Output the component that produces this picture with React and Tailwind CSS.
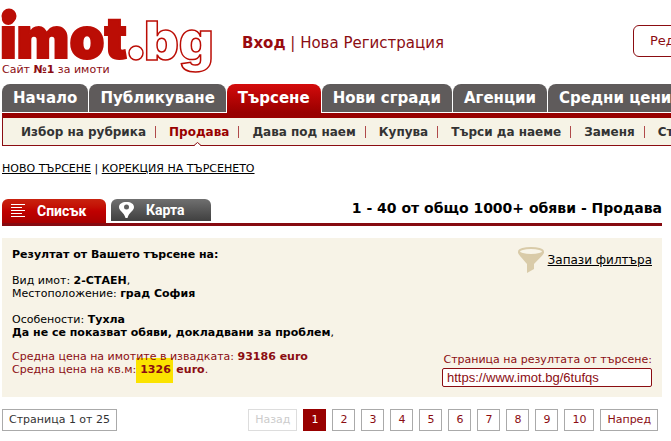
import React, { useState } from 'react';
import clsx from 'clsx';

const sections = ['Начало', 'Публикуване', 'Търсене', 'Нови сгради', 'Агенции', 'Средни цени'];
const rubrics = ['Избор на рубрика', 'Продава', 'Дава под наем', 'Купува', 'Търси да наеме', 'Заменя', 'Статистика'];
const pages = [1, 2, 3, 4, 5, 6, 7, 8, 9, 10];

const Logo = () => (
  <svg className="block h-[75px] w-[216px] overflow-visible" viewBox="0 0 216 75" role="img" aria-label="imot.bg">
    <g fontFamily="Inter, sans-serif" fontWeight="900">
      <text x="0" y="58" fontSize="56" fill="#bb0d05" stroke="#bb0d05" strokeWidth="2">imot</text>
      <text x="144" y="60" fontSize="54" fill="#fff" stroke="#bb0d05" strokeWidth="1.5">bg</text>
    </g>
    <circle cx="9" cy="16" r="7.500" fill="#bb0d05" />
    <circle cx="136" cy="53" r="7" fill="#fff" stroke="#bb0d05" strokeWidth="1.5" />
  </svg>
);

const Header = () => (
  <header className="flex h-[84px] items-start text-[#8b0d12]">
    <a href="#" className="block w-[216px] shrink-0">
      <Logo />
      <span className="-mt-3 block pl-0.5 text-[11px] leading-[13px]">
        Сайт <b>№1</b> за имоти
      </span>
    </a>
    <div className="ml-[26px] mt-8 text-[15px] leading-[22px]">
      <a href="#" className="font-bold text-[#990b10]">Вход</a> | <a href="#">Нова Регистрация</a>
    </div>
    <button
      type="button"
      className="ml-auto -mr-28 mt-[25px] h-8 w-[150px] shrink-0 rounded-md border border-[#8b0d12] pl-4 text-left text-[13px]"
    >
      Редактиране
    </button>
  </header>
);

const MainNav = () => (
  <nav className="ml-0.5">
    <ul className="flex h-[29px] gap-px">
      {sections.map((name) => (
        <li key={name} className="shrink-0">
          <a
            href="#"
            className={clsx(
              'block rounded-t-lg px-[11px] text-[15px] leading-7 font-bold text-white',
              name === 'Търсене' ? 'h-[29px] bg-linear-to-b from-[#d40c0c] to-[#980000]' : 'h-7 bg-[#5f5b5b]'
            )}
          >
            {name}
          </a>
        </li>
      ))}
    </ul>
    <div className="border-t-5 border-b border-l border-t-[#980000] border-b-[#8b0d12] border-l-[#8b0d12] bg-[#f6f3e6]">
      <ul className="flex h-[27px] items-center pl-[18px] text-[12px] leading-4 font-bold text-[#333]">
        {rubrics.map((name) => (
          <li key={name} className="relative flex h-full shrink-0 items-center">
            <a href="#" className={clsx(name === 'Продава' && 'text-[#980000]')}>{name}</a>
            <span className="mr-[13px] ml-[9px] h-3 w-px bg-[#b04a4a]" />
            {name === 'Продава' && (
              <svg className="absolute -bottom-px left-[25px] h-1 w-[7px]" viewBox="0 0 7 4">
                <path d="M0 4L3.5 .5L7 4Z" fill="#fff" />
                <path d="M0 3.5L3.5 .5L7 3.5" fill="none" stroke="#8b0d12" />
              </svg>
            )}
          </li>
        ))}
      </ul>
    </div>
  </nav>
);

const ViewTabs = () => (
  <div className="flex h-[27px] items-start border-b-3 border-[#860a10]">
    <button
      type="button"
      className="flex h-6 w-[104px] items-center rounded-t-md bg-linear-to-b from-[#c9220f] via-[#c00000] to-[#a80000] pl-2 font-[Roboto,sans-serif] text-[14px] font-bold text-white"
    >
      <svg className="mr-3 h-[14px] w-[15px]" viewBox="0 0 15 14" stroke="#fff">
        <path d="M1 .5H15M1 3.5H12M1 6.5H15M1 9.5H12M1 12.5H15" />
      </svg>
      Списък
    </button>
    <button
      type="button"
      className="ml-[5px] flex h-[22px] w-[100px] items-center rounded-t-md bg-linear-to-b from-[#707070] to-[#404040] pl-2 font-[Roboto,sans-serif] text-[14px] font-bold text-white"
    >
      <svg className="mr-3 h-4 w-[15px]" viewBox="0 0 15 16">
        <path d="M7.5 0C3 0 0 2 0 5c0 4 5 5 6.500 11h2C10 10 15 9 15 5c0-3-3-5-7.500-5z" fill="#fff" />
        <circle cx="7.500" cy="5" r="2.500" fill="#606060" />
      </svg>
      Карта
    </button>
    <h1 className="ml-auto text-[14px] leading-[18px] font-bold text-black">1 - 40 от общо 1000+ обяви - Продава</h1>
  </div>
);

const FunnelIcon = () => (
  <svg className="h-[26px] w-[26px]" viewBox="0 0 26 26">
    <path d="M0 5C0 7 2 9 9 17v9l7-4v-5C24 9 26 7 26 5z" fill="#d9cba9" />
    <ellipse cx="13" cy="4.500" rx="12" ry="3.500" fill="#f8f5ea" stroke="#d9cba9" strokeWidth="2" />
  </svg>
);

const Summary = () => (
  <section className="mt-3 flex h-[159px] justify-between bg-[#f7f3e7] px-[10px] text-[11px] leading-[13px] text-black">
    <div className="shrink-0 pt-[10px]">
      <b>Резултат от Вашето търсене на:</b>
      <p className="mt-[13px]">
        Вид имот: <b>2-СТАЕН</b>,
        <br />
        Местоположение: <b>град София</b>
      </p>
      <p className="mt-[13px]">
        Особености: <b>Тухла</b>
        <br />
        <b>Да не се показват обяви, докладвани за проблем</b>,
      </p>
      <p className="mt-[11px] text-[#8b0d12]">
        {/* relative keeps this line above the highlight */}
        <span className="relative">Средна цена на имотите в извадката: <b>93186 euro</b></span>
        <br />
        Средна цена на кв.м:
        <mark className="bg-[#fbe300] pt-[5px] pr-0.5 pb-[7px] pl-1 font-bold text-[#8b0d12]">1326</mark> <b>euro</b>.
      </p>
    </div>
    <div className="flex flex-col items-end justify-between pt-[9px] pb-[10px]">
      <a href="#" className="flex items-center text-[12px] leading-4 underline">
        <FunnelIcon />
        <span className="ml-1">Запази филтъра</span>
      </a>
      <div className="text-[#8b0d12]">
        <label htmlFor="result-url" className="block text-right">Страница на резултата от търсене:</label>
        <input
          id="result-url"
          readOnly
          defaultValue="https://www.imot.bg/6tufqs"
          className="mt-0.5 block h-[19px] w-[210px] rounded-xs border border-[#8b0d12] bg-white px-1 font-['Liberation_Sans',Arial,sans-serif] text-[13px]"
        />
      </div>
    </div>
  </section>
);

const Pager = () => {
  const [page, setPage] = useState(1);

  return (
    <div className="mt-3 flex justify-between pr-1 text-[11px] leading-5 text-[#8b0d12]">
      <span className="border border-[#aaa] px-1.5 text-[#333]">Страница 1 от 25</span>
      <div className="flex gap-1.5">
        <button type="button" disabled className="border border-[#ddd] px-1.5 text-[#ccc]">Назад</button>
        {pages.map((n) => (
          <button
            key={n}
            type="button"
            onClick={() => setPage(n)}
            className={clsx(
              'border text-center',
              n === 10 ? 'w-[30px]' : 'w-[23px]',
              n === page ? 'border-[#980000] bg-[#980000] text-white' : 'border-[#aaa]'
            )}
          >
            {n}
          </button>
        ))}
        <button type="button" className="border border-[#aaa] px-1.5">Напред</button>
      </div>
    </div>
  );
};

const App = () => {
  return (
    <div className="overflow-hidden bg-white pb-[10px] font-['DejaVu_Sans',Verdana,sans-serif] whitespace-nowrap">
      <Header />
      <MainNav />
      <main className="mr-[9px] ml-0.5">
        <div className="pt-[15px] pb-[23px] text-[11px] leading-[15px] text-black">
          <a href="#" className="underline">НОВО ТЪРСЕНЕ</a> | <a href="#" className="underline">КОРЕКЦИЯ НА ТЪРСЕНЕТО</a>
        </div>
        <ViewTabs />
        <Summary />
        <Pager />
      </main>
    </div>
  );
};

export default App;
